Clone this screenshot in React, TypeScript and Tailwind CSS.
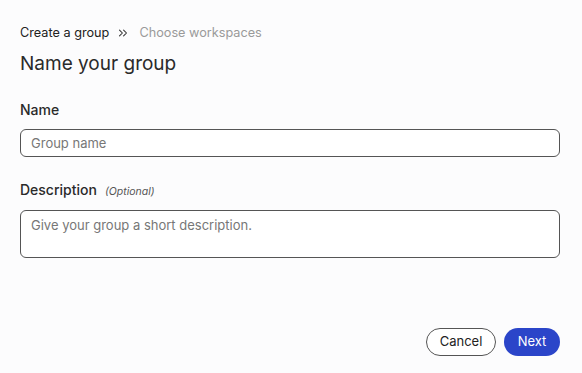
import { ChevronsRight } from 'lucide-react';

export default function App() {
  return (
    <div className="w-[582px] h-[373px] bg-[#fcfcfd] text-[#1f1f1f] flex flex-col pl-5 pr-[22px] pt-[24px] pb-[17px]" style={{ fontFamily: 'Inter, "Noto Sans", sans-serif' }}>
      <div className="flex items-center text-[12.7px] leading-[18px]">
        <span className="text-[#222]">Create a group</span>
        <ChevronsRight size={14} strokeWidth={1.8} className="ml-[7px] mr-[9px] text-[#333]" />
        <span className="text-[#9a9a9a]">Choose workspaces</span>
      </div>
      <h1 className="mt-[10px] text-[19px] leading-[24px] text-[#2a2a2a]">Name your group</h1>

      <label className="mt-[25px] text-[14px] leading-[18px] font-medium text-[#2a2a2a]">Name</label>
      <input
        placeholder="Group name"
        className="mt-[10px] h-[28px] w-full rounded-[6px] border border-[#555] bg-white px-[10px] text-[13px] placeholder:text-[#777] outline-none"
      />

      <div className="mt-[24px] flex items-baseline gap-[8px]">
        <span className="text-[14px] leading-[18px] font-medium text-[#2a2a2a]">Description</span>
        <span className="text-[10.5px] italic text-[#555]">(Optional)</span>
      </div>
      <textarea
        placeholder="Give your group a short description."
        className="mt-[10px] h-[48px] w-full resize-none rounded-[6px] border border-[#555] bg-white px-[10px] py-[5px] text-[13px] leading-[18px] placeholder:text-[#777] outline-none"
      />

      <div className="mt-auto flex justify-end gap-2">
        <button className="h-[28px] w-[70px] rounded-full border border-[#555] bg-white text-[13px] text-[#222]">Cancel</button>
        <button className="h-[28px] w-[56px] rounded-full bg-[#2b45c9] text-[13px] text-white">Next</button>
      </div>
    </div>
  );
}
